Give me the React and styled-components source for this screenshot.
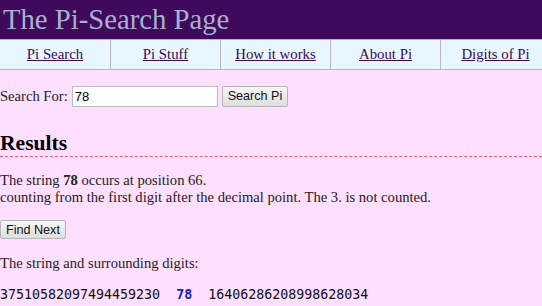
import styled, { createGlobalStyle } from 'styled-components';

const Global = createGlobalStyle`
  html, body {
    margin: 0;
    padding: 0;
    background: #ffdfff;
    overflow: hidden;
  }
`;

const Page = styled.div`
  width: 542px;
  overflow: hidden;
  font-family: "Liberation Serif", serif;
  font-size: 14.6px;
  color: #222;
`;

const Banner = styled.div`
  background: #3f0a5b;
  height: 39px;
  padding-left: 3px;
  color: #a9afcf;
  font-size: 28.7px;
  line-height: 38px;
  white-space: nowrap;
`;

const Nav = styled.div`
  display: grid;
  grid-template-columns: repeat(5, 110px);
  width: 550px;
  background: #e8f6ff;
  border-top: 1px solid #b8b8b8;
  border-bottom: 1px solid #b8b8b8;
`;

const NavCell = styled.div`
  height: 29px;
  display: flex;
  align-items: center;
  justify-content: center;
  border-left: 1px solid #b8b8b8;
  &:first-child {
    border-left: none;
  }
`;

const NavLink = styled.a`
  color: #3a0a55;
  text-decoration: underline;
  font-size: 14.8px;
  white-space: nowrap;
`;

const Content = styled.div`
  padding: 15px 0 0 0;
`;

const SearchRow = styled.form`
  display: flex;
  align-items: center;
  gap: 4px;
  height: 22px;
`;

const Input = styled.input`
  width: 140px;
  height: 15px;
  padding: 2px 2px;
  margin: 0;
  border: 1px solid #bdbdbd;
  background: #fff;
  font-family: "Liberation Sans", sans-serif;
  font-size: 13px;
  color: #000;
`;

const Button = styled.button`
  height: ${(p) => p.$h || 21}px;
  padding: 0 5px;
  margin: 0;
  border: 1px solid #b5b5b5;
  border-radius: 2px;
  background: linear-gradient(#f6f6f6, #dedede);
  font-family: "Liberation Sans", sans-serif;
  font-size: 12.6px;
  color: #111;
`;

const Heading = styled.h2`
  margin: 23px 0 0 0;
  font-size: 21.6px;
  line-height: 26px;
  font-weight: bold;
  color: #000;
  border-bottom: 1px dashed #f0607a;
  padding-bottom: 0;
`;

const Para = styled.p`
  margin: ${(p) => p.$top || 0}px 0 0 0;
  line-height: 17px;
`;

const Digits = styled.div`
  margin-top: 15px;
  font-family: "DejaVu Sans Mono", monospace;
  font-size: 13.3px;
  white-space: pre;
  color: #111;
`;

const Hit = styled.span`
  color: #1b1bb0;
  font-weight: bold;
`;

const links = ['Pi Search', 'Pi Stuff', 'How it works', 'About Pi', 'Digits of Pi'];

export default function App() {
  return (
    <Page>
      <Global />
      <Banner>The Pi-Search Page</Banner>
      <Nav>
        {links.map((l) => (
          <NavCell key={l}>
            <NavLink href="#">{l}</NavLink>
          </NavCell>
        ))}
      </Nav>
      <Content>
        <SearchRow onSubmit={(e) => e.preventDefault()}>
          <span>Search For:</span>
          <Input defaultValue="78" />
          <Button type="submit">Search Pi</Button>
        </SearchRow>
        <Heading>Results</Heading>
        <Para $top={15}>
          The string <b>78</b> occurs at position 66.
          <br />
          counting from the first digit after the decimal point. The 3. is not counted.
        </Para>
        <Para $top={14}>
          <Button type="button" $h={19}>Find Next</Button>
        </Para>
        <Para $top={16}>The string and surrounding digits:</Para>
        <Digits>
          37510582097494459230  <Hit>78</Hit>  16406286208998628034
        </Digits>
      </Content>
    </Page>
  );
}
